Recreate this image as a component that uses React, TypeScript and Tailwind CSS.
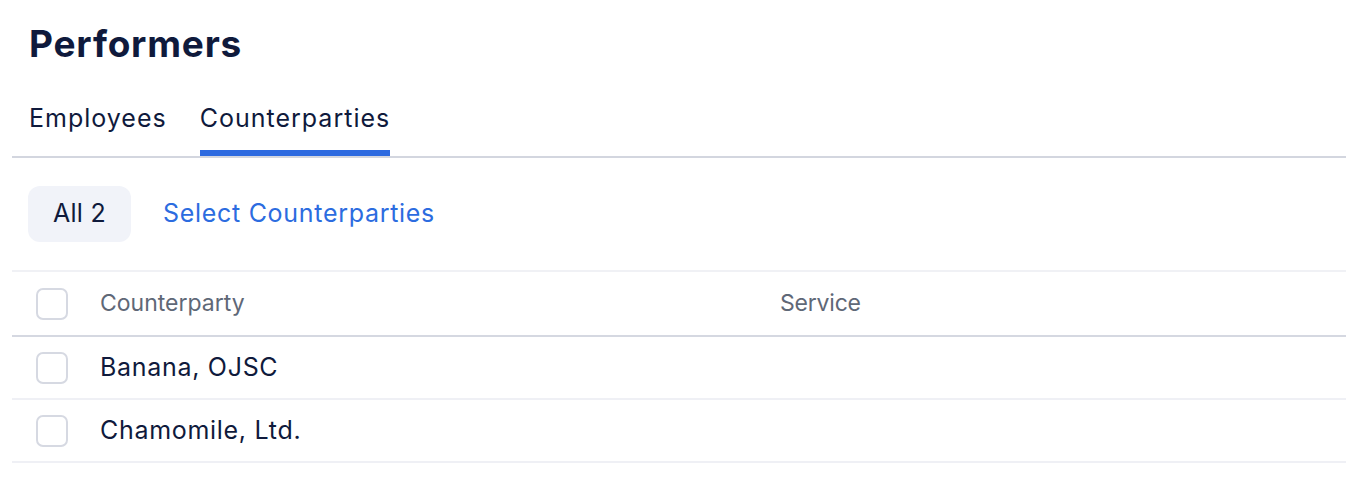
import React from 'react'

const rows = ['Banana, OJSC', 'Chamomile, Ltd.']

function Checkbox() {
  return <span className="block h-8 w-8 rounded-[7px] border-2 border-[#d6d9e2] bg-white" />
}

export default function App() {
  return (
    <div
      className="min-h-[494px] bg-white pl-3 pr-4 text-[#0f1a3c]"
      style={{ fontFamily: 'Inter, "Noto Sans", sans-serif' }}
    >
      <h1 className="pl-[17px] pt-[20px] text-[37px] font-bold leading-[48px] tracking-[0.8px]">
        Performers
      </h1>

      {/* tabs */}
      <div className="mt-[35px] flex gap-[33px] border-b-2 border-[#d3d6df] pl-[17px]">
        <button className="pb-[23px] text-[25px] leading-[30px] tracking-[1px] text-[#0f1a3c]">Employees</button>
        <button className="relative pb-[23px] text-[25px] leading-[30px] tracking-[1px] text-[#0f1a3c]">
          Counterparties
          <span className="absolute bottom-0 left-0 right-0 h-[6px] bg-[#2d6ae0]" />
        </button>
      </div>

      {/* filter */}
      <div className="mt-[28px] flex items-center gap-8 pl-4">
        <span className="flex h-14 w-[103px] items-center justify-center rounded-xl bg-[#f1f3f9] text-[25px] tracking-[0.3px] text-[#0f1a3c]">
          All 2
        </span>
        <button className="text-[25px] tracking-[0.7px] text-[#2c6ce0]">Select Counterparties</button>
      </div>

      {/* table */}
      <div className="mt-[28px] border-t-2 border-[#f0f1f5]">
        <div className="flex h-[65px] items-center border-b-2 border-[#d5d8e1] text-[23px] text-[#5f6877]">
          <div className="flex w-[88px] shrink-0 pl-6">
            <Checkbox />
          </div>
          <div className="w-[680px] shrink-0">Counterparty</div>
          <div className="tracking-[-0.2px]">Service</div>
        </div>
        {rows.map((r) => (
          <div key={r} className="flex h-[63px] items-center border-b-2 border-[#eff0f5] text-[25px] tracking-[0.7px]">
            <div className="flex w-[88px] shrink-0 pl-6">
              <Checkbox />
            </div>
            <div className="w-[680px] shrink-0">{r}</div>
            <div />
          </div>
        ))}
      </div>
    </div>
  )
}
